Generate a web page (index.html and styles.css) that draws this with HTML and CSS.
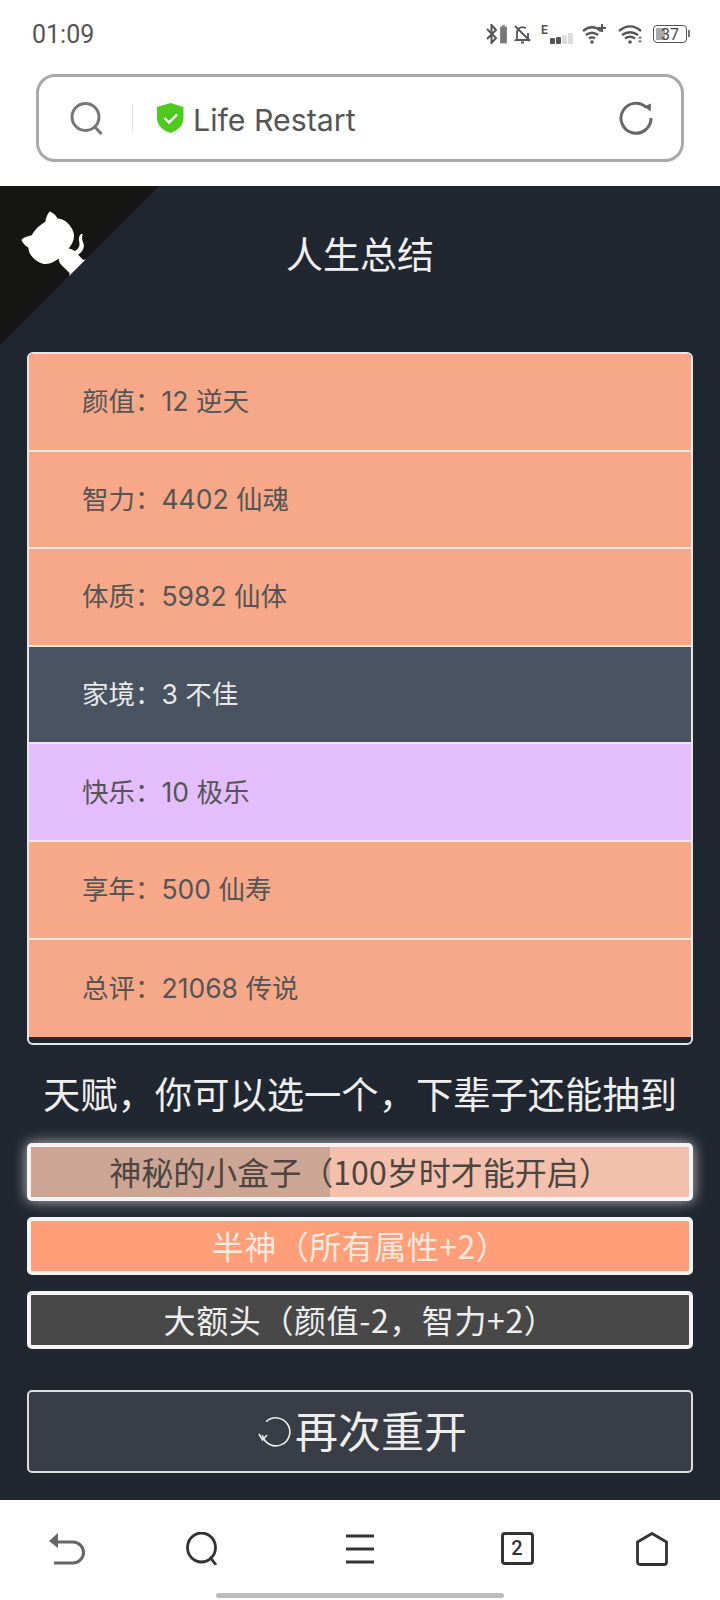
FILE: index.html
```html
<!DOCTYPE html>
<html lang="zh-CN">
<head>
    <meta charset="UTF-8">
    <title>Life Restart</title>
    <link rel="stylesheet" href="styles.css">
</head>
<body>
<div id="statusbar">
    <span class="time">01:09</span>
    <div class="status-icons">
        <svg width="22" height="20" viewBox="0 0 22 20"><path d="M1 5l9 9-4.500 5V1L10 6l-9 9" fill="none" stroke="#555" stroke-width="2"/><rect x="14.500" y="3" width="6" height="16" fill="#777" stroke="#888"/><rect x="16" y="1" width="3" height="2" fill="#888"/></svg>
        <svg class="gap-bell" width="20" height="20" viewBox="0 0 20 20"><path d="M4 15V9a5.500 5.500 0 0 1 9-4.500M15 9v6l2 1H3l1-1M2 2l15 15M8 18.500h3" fill="none" stroke="#555" stroke-width="1.800"/></svg>
        <svg class="gap-sig" width="33" height="20" viewBox="0 0 33 20"><text x="0" y="10" class="e-mark">E</text><rect x="9" y="14" width="5" height="6" rx="1" fill="#555"/><rect x="15" y="13" width="5" height="7" rx="1" fill="#555"/><rect x="21" y="11" width="5" height="9" rx="1" fill="#ddd"/><rect x="27" y="9" width="5" height="11" rx="1" fill="#ddd"/></svg>
        <svg class="gap-8" width="25" height="20" viewBox="0 0 25 20"><path d="M1 7c6-5 12-5 18 0M4 11c4-3 8-3 12 0M7 14.500c2-1.500 4-1.500 6 0" fill="none" stroke="#555" stroke-width="2.400"/><circle cx="10" cy="18" r="1.800" fill="#555"/><path d="M20 0v8M16 4h8" stroke="#555" stroke-width="2"/></svg>
        <svg class="gap-11" width="25" height="20" viewBox="0 0 25 20"><path d="M1 7c7-6 15-6 22 0M4 11c5-3.500 11-3.500 16 0M7 14.500c3-2 7-2 10 0" fill="none" stroke="#555" stroke-width="2.400"/><circle cx="12" cy="18" r="1.800" fill="#555"/><path d="M20 14.500h4l-2-2.500zM20 16.500h4l-2 2.500z" fill="#666"/></svg>
        <div class="battery"><span class="battery-fill"></span><span class="battery-num">37</span></div>
    </div>
</div>
<div id="urlbar">
    <svg class="url-search" width="34" height="33" viewBox="0 0 34 33"><circle cx="15.500" cy="15" r="13.500" fill="none" stroke="#777" stroke-width="3"/><path d="M24.500 24.500l7 7.500" stroke="#777" stroke-width="3"/></svg>
    <span class="url-line"></span>
    <svg class="shield" width="27" height="30" viewBox="0 0 27 30"><path d="M13.500 0l13 4v11c0 7-5 12-13 15C5 27 0 22 0 15V4z" fill="#4ccb1e"/><path d="M7.500 15l4.500 4.500 8-8" fill="none" stroke="#fff" stroke-width="2.400"/></svg>
    <span class="url-text">Life Restart</span>
    <svg class="reload" width="35" height="34" viewBox="0 0 35 34"><path d="M27.500 6.500A15 15 0 1 0 32 17" fill="none" stroke="#666" stroke-width="3"/><path d="M25 5.500l7-3 -.5 8z" fill="#666"/></svg>
</div>

<div id="main">
    <svg class="corner" width="159" height="159" viewBox="0 0 250 250">
        <path d="M0,0 L250,250 L250,0 Z" fill="#151513"/>
        <path d="M128.3,109.0 C113.8,99.7 119.0,89.6 119.0,89.6 C122.0,82.7 120.5,78.6 120.5,78.6 C119.2,72.0 123.4,76.3 123.4,76.3 C127.3,80.9 125.5,87.3 125.5,87.3 C122.9,97.6 130.6,101.9 134.4,103.2" fill="#fff"/>
        <path d="M115.0,115.0 C114.9,115.1 118.7,116.5 119.8,115.4 L133.7,101.6 C136.9,99.2 139.9,98.4 142.2,98.6 C133.8,88.0 127.5,74.4 143.8,58.0 C148.5,53.4 154.0,51.2 159.7,51.0 C160.3,49.4 163.2,43.6 171.4,40.1 C171.4,40.1 176.1,42.5 178.8,56.2 C183.1,58.6 187.2,61.8 190.9,65.4 C194.5,69.0 197.7,73.2 200.1,77.6 C213.8,80.2 216.3,84.9 216.3,84.9 C212.7,93.1 206.9,96.0 205.4,96.6 C205.1,102.4 203.0,107.8 198.3,112.5 C181.9,128.9 168.3,122.5 157.7,114.1 C157.9,116.9 156.7,120.9 152.7,124.9 L141.0,136.5 C139.8,137.7 141.6,141.9 141.8,141.8 Z" fill="#fff"/>
    </svg>
    <h1>人生总结</h1>
    <ul id="summary">
        <li class="orange">颜值：12 逆天</li>
        <li class="orange">智力：4402 仙魂</li>
        <li class="orange">体质：5982 仙体</li>
        <li class="slate">家境：3 不佳</li>
        <li class="purple">快乐：10 极乐</li>
        <li class="orange">享年：500 仙寿</li>
        <li class="orange">总评：21068 传说</li>
    </ul>
    <h2>天赋，你可以选一个，下辈子还能抽到</h2>
    <ul id="talents">
        <li class="talent mystery"><span class="talent-bar"></span><span class="talent-text">神秘的小盒子（100岁时才能开启）</span></li>
        <li class="talent peach">半神（所有属性+2）</li>
        <li class="talent grey">大额头（颜值-2，智力+2）</li>
    </ul>
    <button id="again">
        <svg width="35" height="35" viewBox="0 0 35 35"><path d="M7 9a14 14 0 1 1-2 14" transform="rotate(8 17 17)" fill="none" stroke="#eee" stroke-width="1.600"/><path d="M1 20l3.500 6 4.500-5" fill="none" stroke="#eee" stroke-width="1.600"/></svg>
        <span class="again-text">再次重开</span>
    </button>
</div>

<div id="navbar">
    <svg width="36" height="32" viewBox="0 0 36 32"><path d="M8 9h16a10 10 0 0 1 0 21H5" fill="none" stroke="#666" stroke-width="3"/><path d="M10 0v15L1 8z" fill="#666" transform="translate(-1 0)"/></svg>
    <svg width="33" height="33" viewBox="0 0 33 33"><ellipse cx="15.500" cy="15.500" rx="14" ry="14.500" fill="none" stroke="#333" stroke-width="2.800"/><path d="M24 25l6 8" stroke="#333" stroke-width="2.800"/></svg>
    <svg width="30" height="30" viewBox="0 0 30 30"><path d="M1 2h28M1 15h28M1 28h28" stroke="#333" stroke-width="2.800"/></svg>
    <div class="tabs">2</div>
    <svg width="32" height="34" viewBox="0 0 32 34"><path d="M16 1.500L30.500 10v20a2.500 2.500 0 0 1-2.500 2.500H4A2.500 2.500 0 0 1 1.500 30V10z" fill="none" stroke="#333" stroke-width="2.800" stroke-linejoin="round"/></svg>
</div>
<div id="home-wrap"><div id="home"></div></div>
</body>
</html>
```

FILE: styles.css
```css
* {
    box-sizing: border-box;
}
body {
    margin: 0;
    width: 720px;
    height: 1600px;
    background: #fff;
    font-family: "Noto Sans CJK SC", "Noto Sans", sans-serif;
    overflow: hidden;
}
ul {
    list-style: none;
    margin: 0;
    padding: 0;
}

#statusbar {
    height: 74px;
    display: flex;
    align-items: center;
    justify-content: space-between;
    padding: 0 33px 6px 32px;
}
.time {
    font-family: Roboto, sans-serif;
    font-size: 25px;
    color: #555;
}
.status-icons {
    display: flex;
    align-items: center;
}
.gap-bell {
    margin-left: 5px;
}
.gap-sig {
    margin-left: 8px;
}
.gap-8 {
    margin-left: 8px;
}
.gap-11 {
    margin-left: 11px;
}
.e-mark {
    font-family: Roboto, sans-serif;
    font-size: 12px;
    font-weight: 700;
    fill: #555;
}
.battery {
    position: relative;
    width: 34px;
    height: 18px;
    margin-left: 10px;
    border: 1.500px solid #555;
    border-radius: 4px;
    text-align: center;
    line-height: 15px;
}
.battery::after {
    content: "";
    position: absolute;
    right: -4px;
    top: 4px;
    width: 2px;
    height: 7px;
    background: #777;
}
.battery-fill {
    position: absolute;
    left: 2px;
    top: 2px;
    bottom: 2px;
    width: 9px;
    background: #aaa;
}
.battery-num {
    position: relative;
    font-family: Roboto, sans-serif;
    font-size: 16px;
    color: #444;
}

#urlbar {
    height: 88px;
    width: 648px;
    margin-left: 36px;
    border: 3px solid #a9a9a9;
    border-radius: 19px;
    display: flex;
    align-items: center;
    padding: 0 27px 0 31px;
}
.url-line {
    width: 1px;
    height: 28px;
    margin-left: 28px;
    background: #e3e3e3;
}
.shield {
    margin-left: 24px;
}
.url-text {
    margin-left: 9px;
    padding-top: 4px;
    font-family: Inter, sans-serif;
    font-size: 30.300px;
    color: #555;
    flex: 1;
}

#main {
    position: relative;
    height: 1314px;
    margin-top: 24px;
    background: #212730;
    padding: 0 27px;
}
.corner {
    position: absolute;
    left: 0;
    top: 0;
    transform: scaleX(-1);
}
h1 {
    margin: 0;
    height: 166px;
    padding-top: 41px;
    text-align: center;
    font-size: 37px;
    line-height: 52px;
    font-weight: 400;
    color: #f0f0f0;
}
#summary {
    height: 693px;
    border: 2px solid #e6e6e6;
    border-radius: 6px;
    overflow: hidden;
}
#summary li {
    height: 97.600px;
    padding-left: 53px;
    padding-bottom: 4px;
    display: flex;
    align-items: center;
    font-family: Inter, "Noto Sans CJK SC", sans-serif;
    font-size: 26.500px;
    color: #555;
    border-bottom: 2px solid #f1e6e0;
}
#summary li:last-child {
    border-bottom: none;
}
#summary .orange {
    background: #f7a888;
}
#summary .slate {
    background: #4a5362;
    color: #e8e8e8;
}
#summary .purple {
    background: #e4bdfd;
}
h2 {
    margin: 0;
    height: 98px;
    padding-top: 21px;
    text-align: center;
    font-size: 37.300px;
    line-height: 54px;
    font-weight: 400;
    color: #eee;
}
#talents {
    display: flex;
    flex-direction: column;
    gap: 16px;
}
.talent {
    position: relative;
    height: 58px;
    padding-bottom: 3px;
    border: 4px solid #f4f4f4;
    border-radius: 5px;
    display: flex;
    align-items: center;
    justify-content: center;
    font-size: 32px;
    line-height: 44px;
}
.mystery {
    background: #f2c0ad;
    color: #4c4540;
    box-shadow: 0 0 14px rgba(255, 255, 255, 0.7);
}
.talent-bar {
    position: absolute;
    left: 0;
    top: 0;
    bottom: 0;
    width: 299px;
    background: #cda594;
}
.talent-text {
    position: relative;
}
.peach {
    background: #ff9e78;
    color: #f7e9df;
    letter-spacing: 0.500px;
}
.grey {
    background: #484848;
    color: #eee;
    letter-spacing: 0.600px;
}
#again {
    display: flex;
    align-items: center;
    justify-content: center;
    width: 100%;
    height: 83px;
    margin-top: 41px;
    padding-left: 11px;
    background: #393d46;
    border: 2px solid #ddd;
    border-radius: 5px;
    font-family: inherit;
    font-size: 43px;
    color: #eee;
}
.again-text {
    margin-left: 2px;
    line-height: 56px;
    padding-bottom: 6px;
}

#navbar {
    height: 93px;
    display: grid;
    grid-template-columns: 134px 136px 180px 134px 136px;
    justify-items: center;
    align-items: center;
    padding-top: 4px;
}
.tabs {
    width: 33px;
    height: 33px;
    border: 3px solid #333;
    border-radius: 4px;
    text-align: center;
    font-family: Roboto, sans-serif;
    font-size: 20px;
    font-weight: 500;
    line-height: 27px;
    color: #333;
}
#home-wrap {
    display: flex;
    justify-content: center;
}
#home {
    width: 288px;
    height: 5px;
    background: #bdbdbd;
    border-radius: 3px;
}
```
